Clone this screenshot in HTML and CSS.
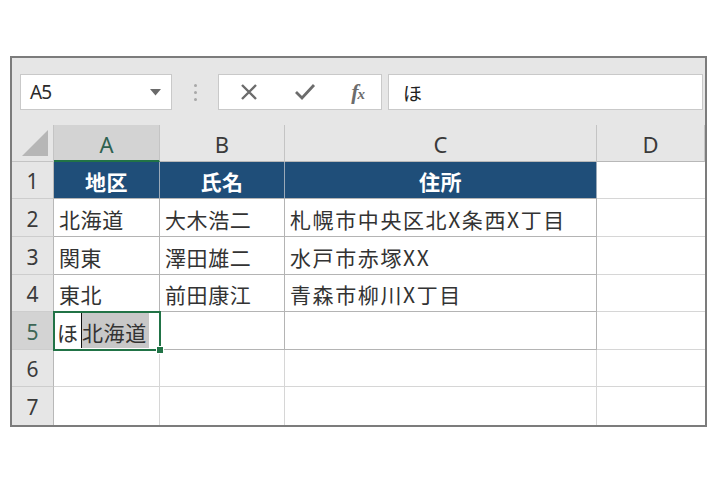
FILE: index.html
```html
<!DOCTYPE html>
<html lang="ja">
<head>
<meta charset="utf-8">
<link rel="stylesheet" href="styles.css">
</head>
<body>
<div class="page">
  <div class="frame">
    <div class="toolbar">
      <div class="namebox">
        <span class="ref">A5</span>
        <svg class="drop" width="11" height="7" viewBox="0 0 11 7"><path d="M0 0 L11 0 L5.5 6.5 Z" fill="#6a6a6a"/></svg>
      </div>
      <div class="dots"><i></i><i></i><i></i></div>
      <div class="fbtns">
        <svg class="ico" width="18" height="18" viewBox="0 0 18 18"><path d="M2 2 L16 16 M16 2 L2 16" stroke="#6c6c6c" stroke-width="2.4" fill="none"/></svg>
        <svg class="ico" width="22" height="18" viewBox="0 0 22 18"><path d="M2 9 L8 15 L20 2" stroke="#6c6c6c" stroke-width="2.8" fill="none"/></svg>
        <span class="fx">f<small>x</small></span>
      </div>
      <div class="finput"><span>ほ</span></div>
    </div>
    <div class="sheet">
      <div class="corner"><svg width="26" height="26" viewBox="0 0 26 26"><path d="M26 0 L26 26 L0 26 Z" fill="#b6b6b6"/></svg></div>
      <div class="ch sel">A</div>
      <div class="ch">B</div>
      <div class="ch">C</div>
      <div class="ch">D</div>

      <div class="rh">1</div>
      <div class="c head">地区</div>
      <div class="c head">氏名</div>
      <div class="c head">住所</div>
      <div class="c d"></div>

      <div class="rh">2</div>
      <div class="c t">北海道</div>
      <div class="c t">大木浩二</div>
      <div class="c t w">札幌市中央区北X条西X丁目</div>
      <div class="c d"></div>

      <div class="rh">3</div>
      <div class="c t">関東</div>
      <div class="c t">澤田雄二</div>
      <div class="c t w">水戸市赤塚XX</div>
      <div class="c d"></div>

      <div class="rh">4</div>
      <div class="c t">東北</div>
      <div class="c t">前田康江</div>
      <div class="c t w">青森市柳川X丁目</div>
      <div class="c d"></div>

      <div class="rh rsel">5</div>
      <div class="c t edit"><span class="typed">ほ</span><span class="sugg">北海道</span><i class="handle"></i></div>
      <div class="c t"></div>
      <div class="c t"></div>
      <div class="c d"></div>

      <div class="rh">6</div>
      <div class="c e"></div>
      <div class="c e"></div>
      <div class="c e"></div>
      <div class="c d"></div>

      <div class="rh last">7</div>
      <div class="c e last"></div>
      <div class="c e last"></div>
      <div class="c e last"></div>
      <div class="c d last"></div>
    </div>
  </div>
</div>
</body>
</html>
```

FILE: styles.css
```css
html, body {
  margin: 0;
  padding: 0;
  background: #ffffff;
}
.page {
  padding: 56px 0 0 10px;
}
.frame {
  width: 697px;
  border: 2px solid #7c7c7c;
  box-sizing: border-box;
  background: #e6e6e6;
}
.toolbar {
  height: 67px;
  display: flex;
  align-items: center;
  padding: 1px 2px 0 8px;
  box-sizing: border-box;
}
.namebox {
  width: 152px;
  height: 36px;
  box-sizing: border-box;
  background: #ffffff;
  border: 1px solid #c9c9c9;
  display: flex;
  align-items: center;
  justify-content: space-between;
  padding: 0 10px 0 9px;
}
.ref {
  font-family: "Noto Sans", "Liberation Sans", sans-serif;
  font-size: 19px;
  color: #2a2a2a;
  letter-spacing: -0.8px;
}
.drop {
  margin-top: 1px;
}
.dots {
  width: 46px;
  height: 36px;
  display: flex;
  flex-direction: column;
  align-items: center;
  justify-content: center;
  gap: 4px;
}
.dots i {
  width: 3px;
  height: 3px;
  border-radius: 50%;
  background: #a8a8a8;
}
.fbtns {
  width: 164px;
  height: 36px;
  box-sizing: border-box;
  background: #ffffff;
  border: 1px solid #c9c9c9;
  display: flex;
  align-items: center;
  justify-content: space-between;
  padding: 0 17px 0 21px;
}
.fx {
  font-family: "Liberation Serif", "DejaVu Serif", serif;
  font-style: italic;
  font-weight: bold;
  font-size: 22px;
  color: #6c6c6c;
  letter-spacing: -1px;
}
.fx small {
  font-size: 15px;
}
.finput {
  flex: 1;
  height: 36px;
  margin-left: 6px;
  box-sizing: border-box;
  background: #ffffff;
  border: 1px solid #c9c9c9;
  display: flex;
  align-items: center;
  padding-left: 14px;
  font-family: "Noto Sans CJK JP", sans-serif;
  font-size: 19px;
  color: #222;
}
.sheet {
  display: grid;
  grid-template-columns: 42px 106px 125px 312px 108px;
  grid-template-rows: 37px 37px 38px 38px 37px 38px 37px 38px;
  background: #ffffff;
}
.sheet > div {
  box-sizing: border-box;
}
.corner {
  background: #e6e6e6;
  border-right: 1px solid #c4c4c4;
  border-bottom: 1px solid #c4c4c4;
  display: flex;
  align-items: flex-end;
  justify-content: flex-end;
  padding: 0 5px 5px 0;
}
.corner svg {
  display: block;
}
.ch {
  background: #e6e6e6;
  border-right: 1px solid #c4c4c4;
  border-bottom: 1px solid #b8b8b8;
  display: flex;
  align-items: center;
  justify-content: center;
  padding-top: 2px;
  font-family: "Noto Sans", "Liberation Sans", sans-serif;
  font-size: 22px;
  color: #3a3a3a;
}
.ch.sel {
  background: #d3d3d3;
  border-bottom: 2px solid #217346;
  color: #2f6150;
}
.rh {
  background: #e6e6e6;
  border-right: 1px solid #b8b8b8;
  border-bottom: 1px solid #cdcdcd;
  display: flex;
  align-items: center;
  justify-content: center;
  padding-top: 2px;
  font-family: "Noto Sans", "Liberation Sans", sans-serif;
  font-size: 21px;
  color: #3a3a3a;
}
.rh.rsel {
  background: #d3d3d3;
  color: #3d6656;
}
.c {
  border-right: 1px solid #d6d6d6;
  border-bottom: 1px solid #d6d6d6;
  font-family: "Noto Sans CJK JP", sans-serif;
  font-size: 21px;
  color: #333333;
  display: flex;
  align-items: center;
  padding: 2px 0 0 5px;
  white-space: nowrap;
  letter-spacing: 0.6px;
}
.c.w {
  letter-spacing: 1.6px;
}
.c.t {
  border-right-color: #b4b4b4;
  border-bottom-color: #b4b4b4;
}
.c.head {
  background: #1f4e79;
  color: #ffffff;
  font-weight: bold;
  justify-content: center;
  padding-left: 0;
  border-right-color: #9aa9b8;
  border-bottom-color: #b4b4b4;
}
.c.d {
  border-right: none;
}
.last {
  border-bottom: none !important;
}
.edit {
  position: relative;
  outline: 2px solid #217346;
  outline-offset: -1px;
  padding: 0 0 0 1px;
  align-items: center;
}
.typed {
  height: 35px;
  display: flex;
  align-items: center;
  padding: 2px 3px 0 2px;
  box-sizing: border-box;
  border-right: 1px solid #111;
  letter-spacing: 0;
}
.sugg {
  height: 35px;
  display: flex;
  align-items: center;
  padding: 2px 2px 0 0;
  box-sizing: border-box;
  background: #c8c8c8;
}
.handle {
  position: absolute;
  right: -5px;
  bottom: -5px;
  width: 6px;
  height: 6px;
  background: #217346;
  border: 1px solid #ffffff;
}
```
